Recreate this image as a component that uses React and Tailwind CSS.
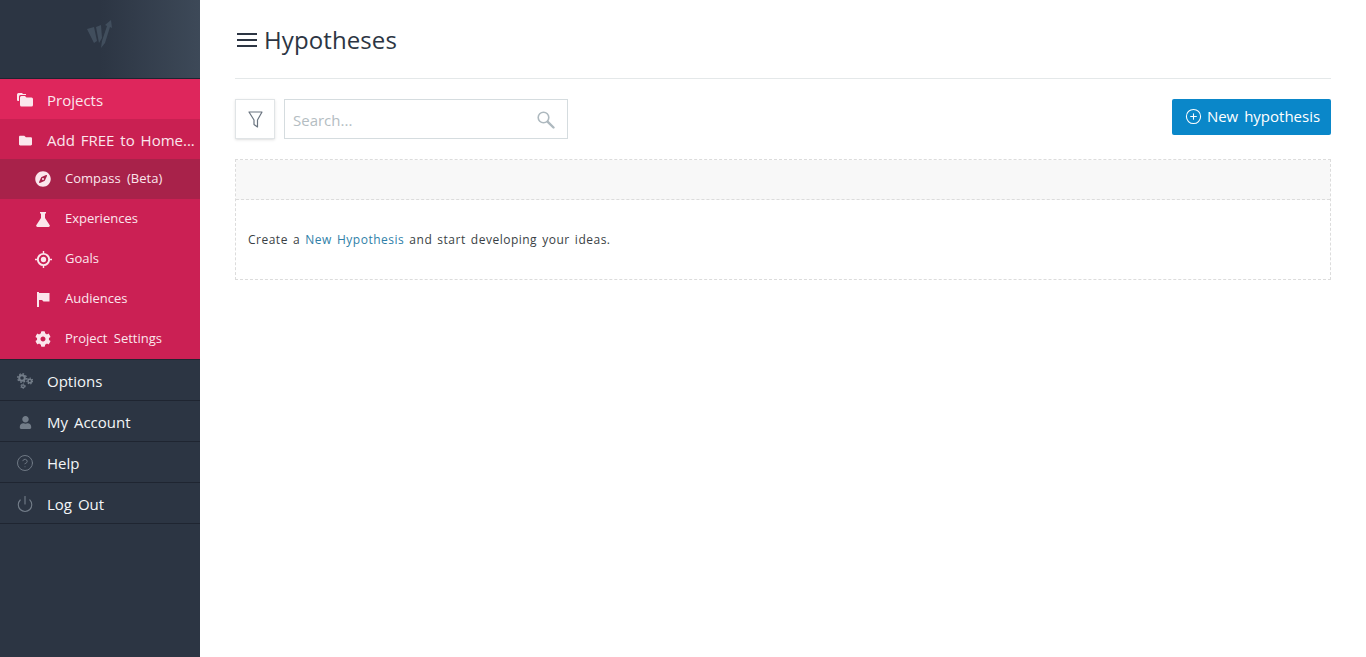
import { CirclePlus, CircleHelp, Power } from 'lucide-react'
import { FaCompass, FaCog, FaFolder, FaUser } from 'react-icons/fa'

function Logo() {
  return (
    <svg width="26" height="30" viewBox="0 0 26 30" className="text-[#414e5d]">
      <path fill="currentColor" d="M0 9l7-2 3 14-3 2zM9 7l5-2 1 13-3 5zM15 21L20 6l-2-1 6-5 1 8-2-1-5 16-4 5z" />
    </svg>
  )
}

function ProjectsIcon() {
  return (
    <svg width="16" height="14" viewBox="0 0 16 14" fill="currentColor">
      <path d="M0 1.5A1.5 1.5 0 0 1 1.500 0H5l1 1h3v1H3.500A1.500 1.500 0 0 0 2 3.500V8H1a1 1 0 0 1-1-1z" />
      <path d="M3 4.500A1.500 1.500 0 0 1 4.500 3H8l1.500 1.500h5A1.500 1.500 0 0 1 16 6v6a1.500 1.500 0 0 1-1.500 1.500h-10A1.500 1.500 0 0 1 3 12z" />
    </svg>
  )
}

function FlaskIcon() {
  return (
    <svg width="14" height="15" viewBox="0 0 14 15" fill="currentColor">
      <path d="M4 0h6v1.500H9V6l4.600 7a1.300 1.300 0 0 1-1.100 2h-11a1.300 1.300 0 0 1-1.100-2L5 6V1.500H4z" />
    </svg>
  )
}

function FlagIcon() {
  return (
    <svg width="14" height="15" viewBox="0 0 14 15" fill="currentColor">
      <path d="M1 0h2v15H1z" />
      <path d="M3 1h10.500v8.500H7.500L6 8H3z" />
    </svg>
  )
}

function GoalIcon() {
  return (
    <svg width="17" height="17" viewBox="0 0 18 18" fill="none" stroke="currentColor">
      <circle cx="9" cy="9" r="6" strokeWidth="2" />
      <circle cx="9" cy="9" r="2.800" fill="currentColor" stroke="none" />
      <path d="M9 0v3M9 15v3M0 9h3M15 9h3" strokeWidth="1.500" />
    </svg>
  )
}

function GearsIcon() {
  return (
    <svg width="16" height="16" viewBox="0 0 16 16" fill="none" stroke="currentColor">
      <circle cx="5" cy="5" r="2.800" strokeWidth="2" />
      <circle cx="5" cy="5" r="4.300" strokeWidth="1.400" strokeDasharray="1.700 1.670" />
      <circle cx="12.800" cy="8" r="1.800" strokeWidth="1.500" />
      <circle cx="12.800" cy="8" r="2.900" strokeWidth="1.200" strokeDasharray="1.300 1.330" />
      <circle cx="6" cy="13.200" r="1.400" strokeWidth="1.300" />
      <circle cx="6" cy="13.200" r="2.300" strokeWidth="1" strokeDasharray="1.100 1.300" />
    </svg>
  )
}

function MenuIcon() {
  return (
    <svg width="20" height="14" viewBox="0 0 20 14" stroke="currentColor" strokeWidth="2">
      <path d="M0 1h20M0 7h20M0 13h20" />
    </svg>
  )
}

function FilterIcon() {
  return (
    <svg width="15" height="17" viewBox="0 0 15 17" fill="none" stroke="currentColor" strokeWidth="1.200" strokeLinejoin="round">
      <path d="M1 1h13L9.500 9v7L6 13.500V9z" />
    </svg>
  )
}

function SearchIcon() {
  return (
    <svg width="18" height="18" viewBox="0 0 18 18" fill="none" stroke="currentColor" strokeLinecap="round">
      <circle cx="6.500" cy="6.500" r="5.300" strokeWidth="1.600" />
      <path d="M10.800 10.800l5.700 5.700" strokeWidth="2.400" />
    </svg>
  )
}

const subItems = [
  { label: 'Compass (Beta)', icon: <FaCompass size={16} />, active: true },
  { label: 'Experiences', icon: <FlaskIcon /> },
  { label: 'Goals', icon: <GoalIcon /> },
  { label: 'Audiences', icon: <FlagIcon /> },
  { label: 'Project Settings', icon: <FaCog size={16} /> },
]

const bottomItems = [
  { label: 'Options', icon: <GearsIcon /> },
  { label: 'My Account', icon: <FaUser size={13} /> },
  { label: 'Help', icon: <CircleHelp size={18} strokeWidth={1.25} /> },
  { label: 'Log Out', icon: <Power size={18} strokeWidth={1.5} /> },
]

export default function App() {
  return (
    <div className="flex min-h-[657px] bg-white font-['Open_Sans',sans-serif]">
      <aside className="w-[200px] shrink-0 bg-[#2c3543] text-white">
        <div className="flex h-[79px] items-center justify-center border-b border-[#1f2531] bg-gradient-to-r from-[#2c3543] from-50% to-[#3d4958] pb-2">
          <Logo />
        </div>

        <div className="flex h-10 items-center bg-[#de265c] pt-[2px] text-[15px] text-[#fbe6ec]">
          <span className="flex w-[47px] justify-center pl-[2px]"><ProjectsIcon /></span>
          Projects
        </div>
        <div className="flex h-10 items-center bg-[#c92052] pt-[2px] text-[15px] text-[#fbe6ec]">
          <span className="flex w-[47px] justify-center pl-[3px]"><FaFolder size={13} /></span>
          <span className="whitespace-nowrap [word-spacing:2px]">Add FREE to Home...</span>
        </div>

        <div className="border-b border-[#1f2531] bg-[#cb2054] text-[13px] text-[#fbe6ec]">
          {subItems.map((item) => (
            <div key={item.label} className={`flex h-10 items-center ${item.active ? 'bg-[#a8224a]' : ''}`}>
              <span className="flex w-[65px] justify-center pl-[21px]">{item.icon}</span>
              <span className="[word-spacing:3px]">{item.label}</span>
            </div>
          ))}
        </div>

        {bottomItems.map((item) => (
          <div key={item.label} className="flex h-[41px] items-center border-b border-[#1f2531] pt-[2px] text-[15px] text-[#f3f5f7]">
            <span className="flex w-[47px] justify-center pl-[3px] text-[#737d89]">{item.icon}</span>
            <span className="[word-spacing:2px]">{item.label}</span>
          </div>
        ))}
      </aside>

      <main className="flex-1 px-[35px]">
        <div className="flex h-[79px] items-center gap-[7px] border-b border-[#e4e8e9] pt-[1px] pl-[2px] text-[#2c3543]">
          <MenuIcon />
          <h1 className="text-2xl font-normal tracking-[0.1px]">Hypotheses</h1>
        </div>

        <div className="mt-5 flex items-start justify-between">
          <div className="flex gap-[9px]">
            <button className="flex size-10 items-center justify-center border border-[#e0e4e6] bg-white text-[#6b7580] shadow-sm">
              <FilterIcon />
            </button>
            <div className="flex h-10 w-[284px] items-center justify-between border border-[#d5dcdf] pl-2 pr-3 pt-[2px] text-[15px] text-[#b4bdc2]">
              <span>Search...</span>
              <span className="text-[#aeb9bf]"><SearchIcon /></span>
            </div>
          </div>
          <button className="flex h-9 w-[159px] items-center justify-center gap-[5px] rounded-[2px] bg-[#0a87c9] pl-[2px] pb-[1px] text-[15px] text-white">
            <CirclePlus size={17} strokeWidth={1.5} />
            <span className="[word-spacing:2px]">New hypothesis</span>
          </button>
        </div>

        <div className="mt-5 border border-dashed border-[#dcdcdc]">
          <div className="h-10 border-b border-dashed border-[#dcdcdc] bg-[#f8f8f8]" />
          <p className="flex h-[79px] items-center whitespace-pre px-3 text-xs tracking-[0.5px] text-[#3a3f45] [word-spacing:1.5px]">
            Create a <a className="text-[#2f7fa8]">New Hypothesis</a> and start developing your ideas.
          </p>
        </div>
      </main>
    </div>
  )
}
